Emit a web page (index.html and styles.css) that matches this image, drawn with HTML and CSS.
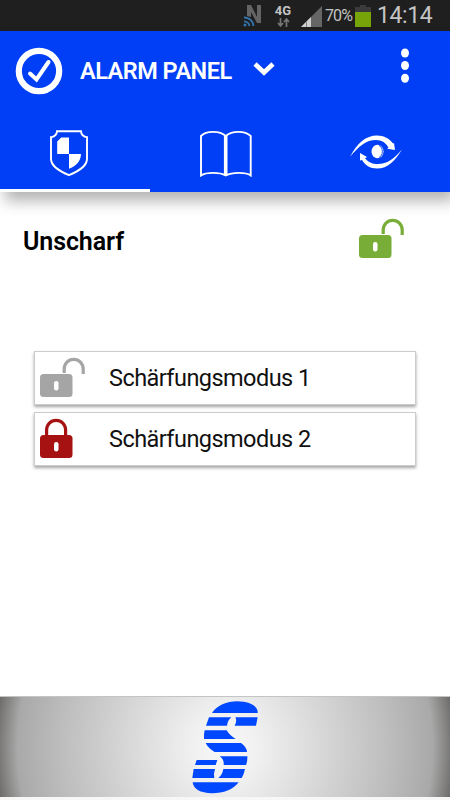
FILE: index.html
```
<!DOCTYPE html>
<html lang="de">
<head>
  <meta charset="UTF-8">
  <meta name="viewport" content="width=device-width, initial-scale=1.0">
  <title>Alarm Panel</title>
  <link rel="stylesheet" href="styles.css">
</head>

<body>

  <!-- Statusleiste -->
  <div class="statusbar">
    <svg class="nfc" width="20" height="24" viewBox="0 0 20 24">
      <path d="M4 12V1h4l6 12V1h4v18h-4L8 8v5" fill="#656565"/>
      <g fill="none" stroke="#3477ae" stroke-width="1.8">
        <path d="M1 13.5a9 9 0 0 1 9.5 8.500"/>
        <path d="M1 17.300a5.500 5.500 0 0 1 5.500 4.700"/>
      </g>
      <circle cx="2" cy="21" r="1.500" fill="#3477ae"/>
    </svg>
    <div class="network">
      <span>4G</span>
      <svg width="13" height="10" viewBox="0 0 13 10">
        <path d="M3.500 0v7M1 5l2.500 3L6 5M9.500 9V2M7 4l2.500-3L12 4" fill="none" stroke="#757575" stroke-width="1.700"/>
      </svg>
    </div>
    <svg class="signal" width="21" height="21" viewBox="0 0 21 21">
      <path d="M0 21L21 0v21z" fill="#666"/>
      <path d="M0 21L10 11v10z" fill="#d0d0d0"/>
      <path d="M5.500 15v6" stroke="#888" stroke-width="1"/>
    </svg>
    <span class="percent">70%</span>
    <svg class="battery" width="16" height="22" viewBox="0 0 16 22">
      <path d="M5 0h6v2h5v5H0V2h5z" fill="#3b3b3b"/>
      <path d="M0 7h16v15H0z" fill="#77a509"/>
    </svg>
    <span class="clock">14:14</span>
  </div>

  <header class="header">
    <div class="titlebar">
      <svg class="logo" width="48" height="48" viewBox="0 0 48 48" fill="none" stroke="#fff">
        <circle cx="24" cy="24" r="20.200" stroke-width="6.200"/>
        <path d="M15 26.500l6.500 6L33.500 15" stroke-width="4" stroke-linecap="round"/>
      </svg>
      <h1>ALARM PANEL</h1>
      <svg class="arrow" width="22" height="15" viewBox="0 0 22 15">
        <path d="M2 2l9 8.500L20 2" fill="none" stroke="#fff" stroke-width="4.600"/>
      </svg>
      <svg class="menu" width="8" height="36" viewBox="0 0 8 36" fill="#fff">
        <ellipse cx="4" cy="5" rx="4" ry="4.500"/>
        <ellipse cx="4" cy="17.500" rx="4" ry="4.500"/>
        <ellipse cx="4" cy="30.300" rx="4" ry="4.500"/>
      </svg>
    </div>

    <nav class="tabs">
      <a class="tab active">
        <svg width="38" height="47" viewBox="0 0 38 47">
          <path d="M7 1.200h24c0 3 2.500 5.800 6 6V29c0 7-10 13-18 16.200C11 42 1 36 1 29V7.200c3.500-.2 6-3 6-6z" fill="none" stroke="#fff" stroke-width="1.900"/>
          <path d="M19 7.500V24H7.200V11.500l4-4zM19 24h12c0 7-5.500 12.500-12 14.800z" fill="#fff"/>
        </svg>
      </a>
      <a class="tab">
        <svg width="52" height="47" viewBox="0 0 52 47">
          <path d="M1 45.500V6C6 .5 20 .5 25.700 6C32 .5 45 .5 50.700 6v39.500C46 42 32 42 25.700 45.500C20 42 6 42 1 45.500z" fill="none" stroke="#fff" stroke-width="1.900"/>
          <path d="M25.700 5v40.500" stroke="#fff" stroke-width="3.600"/>
        </svg>
      </a>
      <a class="tab">
        <svg width="52" height="34" viewBox="0 0 52 34" fill="#fff">
          <path d="M0 22C7 8 16 .5 27 .5c7 0 12.500 3 16 8l1-.5 1 7-8-1.200 1.500-1C36 8 32 5 26 5 16 5 9 11 0 22z"/>
          <path d="M52 14.500C45 26 38 33.500 27 33.500c-7 0-12-3.500-15-8.500l-2 .5V18l7 4-2 1.200C18 27 22 29 28 29c9 0 16-5 24-14.500z"/>
          <ellipse cx="27.500" cy="16.500" rx="6" ry="6.700"/>
          <path d="M29 10.500c4.500 2 4.500 10 0 12" fill="none" stroke="#003ff5" stroke-width=".9"/>
        </svg>
      </a>
    </nav>
  </header>

  <main class="content">
    <div class="state">
      <h2>Unscharf</h2>
      <svg class="lock green" width="46" height="41" viewBox="0 0 46 41">
        <path class="bow" d="M24.200 16V12a9.500 9.700 0 0 1 19 0v5"/>
        <rect y="17" width="32.500" height="23" rx="3.500"/>
        <rect class="hole" x="14" y="24" width="4.500" height="9.500" rx="2.200"/>
      </svg>
    </div>

    <div class="modes">
      <button class="mode">
        <svg class="lock grey" width="46" height="41" viewBox="0 0 46 41">
          <path class="bow" d="M24.200 16V12a9.500 9.700 0 0 1 19 0v5"/>
          <rect y="17" width="32.500" height="23" rx="3.500"/>
          <rect class="hole" x="14" y="24" width="4.500" height="9.500" rx="2.200"/>
        </svg>
        <span>Schärfungsmodus 1</span>
      </button>
      <button class="mode">
        <svg class="lock red" width="46" height="41" viewBox="0 0 46 41">
          <path class="bow" d="M6.600 17V12a9.500 9.700 0 0 1 19 0v5"/>
          <rect y="17" width="32.500" height="23" rx="3.500"/>
          <rect class="hole" x="14" y="24" width="4.500" height="9.500" rx="2.200"/>
        </svg>
        <span>Schärfungsmodus 2</span>
      </button>
    </div>
  </main>

  <footer class="footer">
    <svg width="66" height="93" viewBox="576 46 198 279" fill="#0048ff">
      <path d="M636 82C650 60 680 47 712 47C750 48 775 62 773 82z"/>
      <path d="M627 95h67Q683 104 681 120h-63zM706 95h67l-5 25h-64Q712 106 706 95z"/>
      <path d="M614 134h66Q688 148 707 160h-95Q611 146 614 134z"/>
      <path d="M617 172h106Q740 184 741 199h-97Q625 188 617 172z"/>
      <path d="M659 212h83Q743 226 738 238h-67Q673 222 659 212z"/>
      <path d="M590 223h62l-5 15h-62z"/>
      <path d="M581 250h64Q640 264 643 277h-66zM670 250h65Q732 266 725 277h-70Q667 268 670 250z"/>
      <path d="M578 290h138C700 312 670 323 636 323C600 322 580 310 578 290z"/>
    </svg>
  </footer>

</body>
</html>
```
FILE: styles.css
```
* {
  box-sizing: border-box;
}
body {
  font-family: Roboto, sans-serif;
  background-color: white;
  margin: 0;
  height: 800px;
  display: flex;
  flex-direction: column;
  overflow: hidden;
}
h1, h2 {
  margin: 0;
}

/* Statusleiste */
.statusbar {
  height: 31px;
  background-color: #1f1f1f;
  color: #c4c4c4;
  display: flex;
  align-items: flex-start;
  padding-left: 243px;
}
.nfc {
  margin-top: 4px;
}
.network {
  width: 18px;
  margin: 3px 0 0 11px;
  font-size: 13px;
  line-height: 15px;
  font-weight: bold;
  display: flex;
  flex-direction: column;
  align-items: center;
}
.signal {
  margin: 6px 0 0 9px;
}
.percent {
  width: 27px;
  margin: 6px 0 0 3px;
  font-size: 16px;
  line-height: 20px;
  letter-spacing: -0.9px;
}
.battery {
  margin: 5px 0 0 3px;
}
.clock {
  margin: 2px 0 0 6px;
  font-size: 23px;
  line-height: 27px;
  letter-spacing: -0.4px;
}

/* Kopfbereich */
.header {
  height: 161px;
  background-color: #003ff5;
  box-shadow: 5px 9px 14px rgba(0, 0, 0, 0.3);
  display: flex;
  flex-direction: column;
}
.titlebar {
  height: 79px;
  display: flex;
  align-items: center;
  padding: 0 41px 0 15px;
}
.titlebar h1 {
  width: 153px;
  margin-left: 17px;
  color: white;
  font-size: 23.5px;
  font-weight: 600;
  letter-spacing: -0.5px;
  white-space: nowrap;
}
.arrow {
  margin: -3px 0 0 20px;
}
.menu {
  margin: -10px 0 0 auto;
}
.tabs {
  flex: 1;
  display: grid;
  grid-template-columns: repeat(3, 1fr);
}
.tab {
  display: flex;
  align-items: center;
  justify-content: center;
  padding: 8px 0 0 1px;
  border-bottom: 3px solid transparent;
}
.tab:last-child {
  padding: 4px 0 0 1px;
}
.tab.active {
  border-bottom-color: white;
  padding-right: 14px;
}

/* Inhalt */
.content {
  flex: 1;
}
.state {
  display: flex;
  justify-content: space-between;
  padding: 26px 45px 0 23px;
}
.state h2 {
  margin-top: 9px;
  font-size: 25px;
  line-height: 29px;
  font-weight: 600;
  letter-spacing: -0.1px;
}
.modes {
  display: flex;
  flex-direction: column;
  gap: 7px;
  margin: 92px 34px 0;
}
.mode {
  height: 54px;
  display: flex;
  align-items: center;
  padding: 0 0 0 5px;
  border: 1px solid #ccc;
  background-color: white;
  box-shadow: 0 2px 3px rgba(0, 0, 0, 0.36);
  font-family: inherit;
  font-size: 23.5px;
  letter-spacing: -0.55px;
  color: #111;
}
.mode span {
  margin-left: 23px;
}
.mode .lock {
  margin-top: -2px;
}
.lock .bow {
  fill: none;
  stroke-width: 3.2;
}
.lock .hole {
  fill: white;
}
.green {
  fill: #78ae38;
}
.green .bow {
  stroke: #78ae38;
}
.grey {
  fill: #a5a5a5;
}
.grey .bow {
  stroke: #a5a5a5;
}
.red {
  fill: #a61212;
}
.red .bow {
  stroke: #a61212;
}

.footer {
  height: 104px;
  border-top: 1px solid #c4c4c4;
  border-bottom: 3px solid #f7f7f7;
  background: radial-gradient(ellipse 228px 240px at 50% 50%, #f8f8f8 0%, #f0f0f0 15%, #d8d8d8 42%, #bdbdbd 72%, #a9a9a9 91%, #6c6b69 101%);
  display: flex;
  justify-content: center;
  padding-top: 4px;
}
```
